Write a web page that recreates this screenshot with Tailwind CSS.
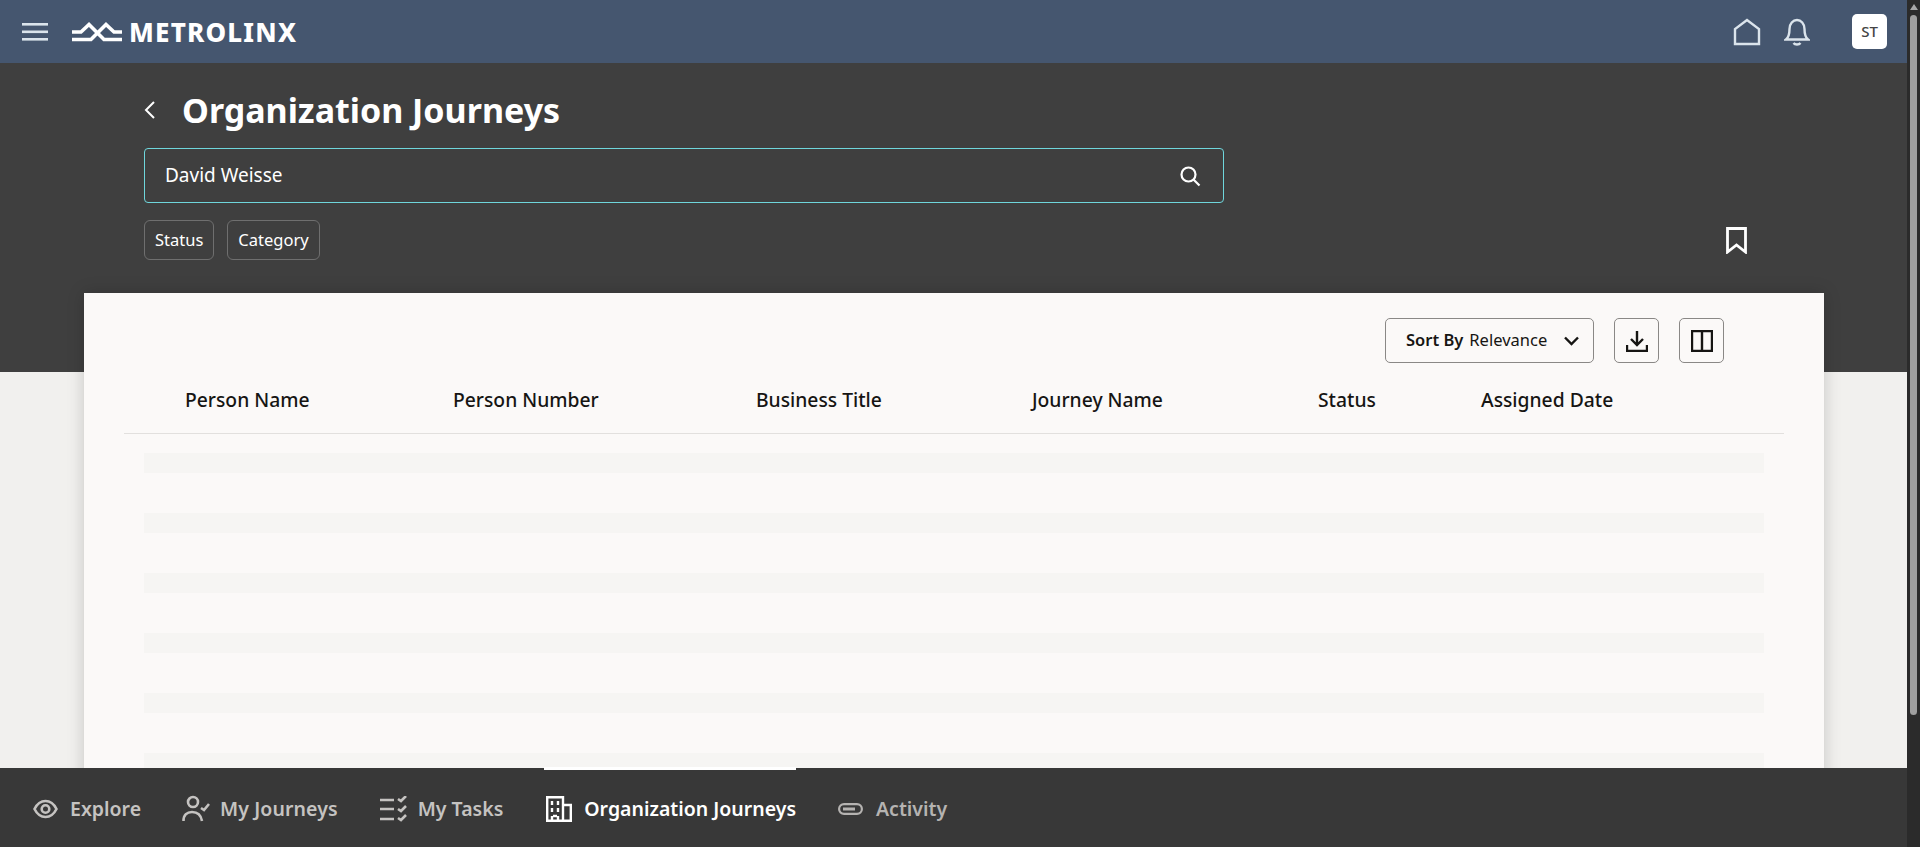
<!DOCTYPE html>
<html lang="en">

<head>
    <meta charset="UTF-8">
    <meta name="viewport" content="width=device-width, initial-scale=1.0">
    <title>Organization Journeys</title>
    <script src="https://cdn.jsdelivr.net/npm/@tailwindcss/browser@4"></script>
</head>

<body class="h-screen overflow-hidden flex bg-[#f1f0ee] font-['Noto_Sans',sans-serif]">
    <div class="flex-1 min-w-0 flex flex-col h-full">
        <!-- top bar -->
        <header class="h-[63px] shrink-0 bg-[#45566f] flex items-center pl-[22px] pr-[20px]">
            <svg class="w-[26px] h-[20px] text-[#dbe4ec]" viewBox="0 0 26 20" fill="currentColor">
                <rect y="1" width="26" height="2.600"/><rect y="8.500" width="26" height="2.600"/><rect y="16" width="26" height="2.600"/>
            </svg>
            <svg class="w-[50px] h-[20px] ml-[24px] text-white" viewBox="0 0 50 20" fill="none" stroke="currentColor" stroke-width="3.600">
                <path d="M0 10H9L17 2.500L32 17.500H50"/>
                <path d="M0 17.500H19L34 2.500L42 10H50"/>
            </svg>
            <span class="ml-[7px] text-[26px] leading-none font-extrabold text-white tracking-[1.2px]">METROLINX</span>
            <div class="ml-auto flex items-center">
                <svg class="w-[28px] h-[28px] text-[#dbe4ec]" viewBox="0 0 28 28" fill="none" stroke="currentColor" stroke-width="2.400">
                    <path d="M2 26V11L14 2L26 11V26Z"/>
                </svg>
                <svg class="w-[26px] h-[28px] ml-[23px] text-[#dbe4ec]" viewBox="0 0 26 28" fill="none" stroke="currentColor" stroke-width="2.400">
                    <path d="M2 21.500C5 19 5.500 16 5.500 11C5.500 5.500 9 2 13 2S20.500 5.500 20.500 11C20.500 16 21 19 24 21.500Z"/>
                    <path d="M9.500 25C11 27 15 27 16.500 25"/>
                </svg>
                <div class="w-[35px] h-[35px] ml-[42px] bg-white rounded-[5px] flex items-center justify-center text-[15px] text-[#444] font-medium">ST</div>
            </div>
        </header>

        <main class="flex-1 min-h-0 overflow-hidden">
            <!-- dark band -->
            <section class="h-[309px] bg-[#3f3f3f] pl-[144px] pr-[160px] text-white">
                <div class="flex items-center h-[47px] pt-[47px] pb-[47px]">
                    <svg class="w-[11px] h-[18px]" viewBox="0 0 11 18" fill="none" stroke="currentColor" stroke-width="2">
                        <path d="M10 1L2 9L10 17"/>
                    </svg>
                    <h1 class="ml-[27px] text-[34px] leading-none font-bold whitespace-nowrap">Organization Journeys</h1>
                </div>
                <div class="w-[1080px] h-[55px] mt-[-9px] border border-[#6fd6dc] rounded-[4px] flex items-center pl-[20px] pr-[22px]">
                    <span class="text-[19px]">David Weisse</span>
                    <svg class="ml-auto w-[22px] h-[22px]" viewBox="0 0 22 22" fill="none" stroke="currentColor" stroke-width="2.200">
                        <circle cx="9.500" cy="9.500" r="7"/>
                        <path d="M14.500 14.500L20.500 20.500"/>
                    </svg>
                </div>
                <div class="flex items-center mt-[17px]">
                    <div class="h-[40px] px-[10px] border border-[#6f6f6f] rounded-[6px] flex items-center text-[16.500px]">Status</div>
                    <div class="h-[40px] px-[10px] ml-[13px] border border-[#6f6f6f] rounded-[6px] flex items-center text-[16.500px]">Category</div>
                    <svg class="ml-auto w-[21px] h-[27px]" viewBox="0 0 21 27" fill="none" stroke="currentColor" stroke-width="2.800">
                        <path d="M1.500 1.500H19.500V25L10.500 18L1.500 25Z"/>
                    </svg>
                </div>
            </section>

            <!-- results card -->
            <section class="ml-[84px] mr-[83px] -mt-[79px] relative h-[600px] bg-[#fbf9f8] shadow-[0_0_16px_rgba(0,0,0,0.18)] px-[40px]">
                <div class="flex justify-end items-center gap-[20px] pt-[25px] pr-[60px] text-[#161513]">
                    <div class="w-[209px] h-[45px] bg-[#fbf9f8] border border-[#8a8886] rounded-[5px] flex items-center pl-[20px] pr-[14px] text-[16.500px] whitespace-nowrap">
                        <span class="font-semibold">Sort By</span><span class="ml-[6px]">Relevance</span>
                        <svg class="ml-auto w-[15px] h-[10px]" viewBox="0 0 15 10" fill="none" stroke="currentColor" stroke-width="2.400">
                            <path d="M1 1.500L7.500 8L14 1.500"/>
                        </svg>
                    </div>
                    <div class="w-[45px] h-[45px] border border-[#8a8886] rounded-[5px] flex items-center justify-center">
                        <svg class="w-[22px] h-[22px]" viewBox="0 0 22 22" fill="none" stroke="currentColor" stroke-width="2.400">
                            <path d="M11 1V15M5 9L11 15L17 9M1 15V21H21V15"/>
                        </svg>
                    </div>
                    <div class="w-[45px] h-[45px] border border-[#8a8886] rounded-[5px] flex items-center justify-center">
                        <svg class="w-[22px] h-[22px]" viewBox="0 0 22 22" fill="none" stroke="currentColor" stroke-width="2.400">
                            <path d="M1 1H21V21H1ZM11 1V21"/>
                        </svg>
                    </div>
                </div>
                <div class="grid grid-cols-[268px_303px_276px_286px_163px_1fr] h-[71px] pt-[4px] pl-[61px] items-center border-b border-[#e2e0de] text-[19.300px] font-medium text-[#161513]">
                    <div>Person Name</div>
                    <div>Person Number</div>
                    <div>Business Title</div>
                    <div>Journey Name</div>
                    <div>Status</div>
                    <div>Assigned Date</div>
                </div>
                <div class="px-[20px] pt-[19px] flex flex-col gap-[40px]">
                    <div class="h-[20px] bg-[#f6f5f3]"></div>
                    <div class="h-[20px] bg-[#f6f5f3]"></div>
                    <div class="h-[20px] bg-[#f6f5f3]"></div>
                    <div class="h-[20px] bg-[#f6f5f3]"></div>
                    <div class="h-[20px] bg-[#f6f5f3]"></div>
                    <div class="h-[20px] bg-[#f6f5f3]"></div>
                </div>
            </section>
        </main>

        <!-- bottom tabs -->
        <nav class="relative h-[79px] shrink-0 bg-[#383838] flex items-center pl-[33px] pt-[2px] text-[19.500px] font-semibold text-[#c5c3c1] whitespace-nowrap">
            <div class="flex items-center">
                <svg class="w-[25px] h-[20px]" viewBox="0 0 25 20" fill="none" stroke="currentColor" stroke-width="2.600">
                    <path d="M1.500 10C4 5 8 2 12.500 2S21 5 23.500 10C21 15 17 18 12.500 18S4 15 1.500 10Z"/>
                    <circle cx="12.500" cy="10" r="3.800"/>
                </svg>
                <span class="ml-[12px]">Explore</span>
            </div>
            <div class="flex items-center ml-[41px]">
                <svg class="w-[28px] h-[27px]" viewBox="0 0 28 27" fill="none" stroke="currentColor" stroke-width="2.600">
                    <circle cx="11" cy="7" r="5"/>
                    <path d="M1.500 26C1.500 20 5 17 10 17S19 20 20 26"/>
                    <path d="M19 13L22 15L27 9"/>
                </svg>
                <span class="ml-[10px] tracking-[0.1px]">My Journeys</span>
            </div>
            <div class="flex items-center ml-[42px]">
                <svg class="w-[27px] h-[26px]" viewBox="0 0 27 26" fill="none" stroke="currentColor" stroke-width="2.600">
                    <path d="M0 4H14M0 13H14M0 23H14"/>
                    <path d="M18 3L21 5L26 0M18 13L21 15L26 10M18 22L21 24L26 19"/>
                </svg>
                <span class="ml-[11px]">My Tasks</span>
            </div>
            <div class="flex items-center ml-[41px] pl-[2px] text-white relative">
                <div class="absolute left-0 right-0 top-[-27px] h-[3px] bg-white"></div>
                <svg class="w-[26px] h-[26px]" viewBox="0 0 26 26" fill="none" stroke="currentColor" stroke-width="2.400">
                    <path d="M1.200 24.800V1.200H17V24.800ZM17 9H24.800V24.800H17"/>
                    <path d="M6 5V9M12 5V9M6 12V16M12 12V16M6 20V25M12 20V25M7 20H11"/>
                </svg>
                <span class="ml-[12px]">Organization Journeys</span>
            </div>
            <div class="flex items-center ml-[42px] text-[#b5b3b1]">
                <svg class="w-[25px] h-[12px]" viewBox="0 0 25 12" fill="none" stroke="currentColor" stroke-width="2.200">
                    <rect x="1.100" y="1.100" width="22.800" height="9.800" rx="4.900"/>
                    <path d="M5 6H17" stroke-width="3"/>
                </svg>
                <span class="ml-[13px]">Activity</span>
            </div>
        </nav>
    </div>

    <!-- scrollbar -->
    <div class="w-[13px] shrink-0 h-full bg-[#2b2b2b] flex flex-col items-center pt-[4px]">
        <div class="w-0 h-0 border-l-[4px] border-r-[4px] border-b-[6px] border-l-transparent border-r-transparent border-b-[#a8a8a8]"></div>
        <div class="w-[7px] h-[700px] mt-[5px] rounded-full bg-[#9f9f9f]"></div>
    </div>
</body>

</html>
